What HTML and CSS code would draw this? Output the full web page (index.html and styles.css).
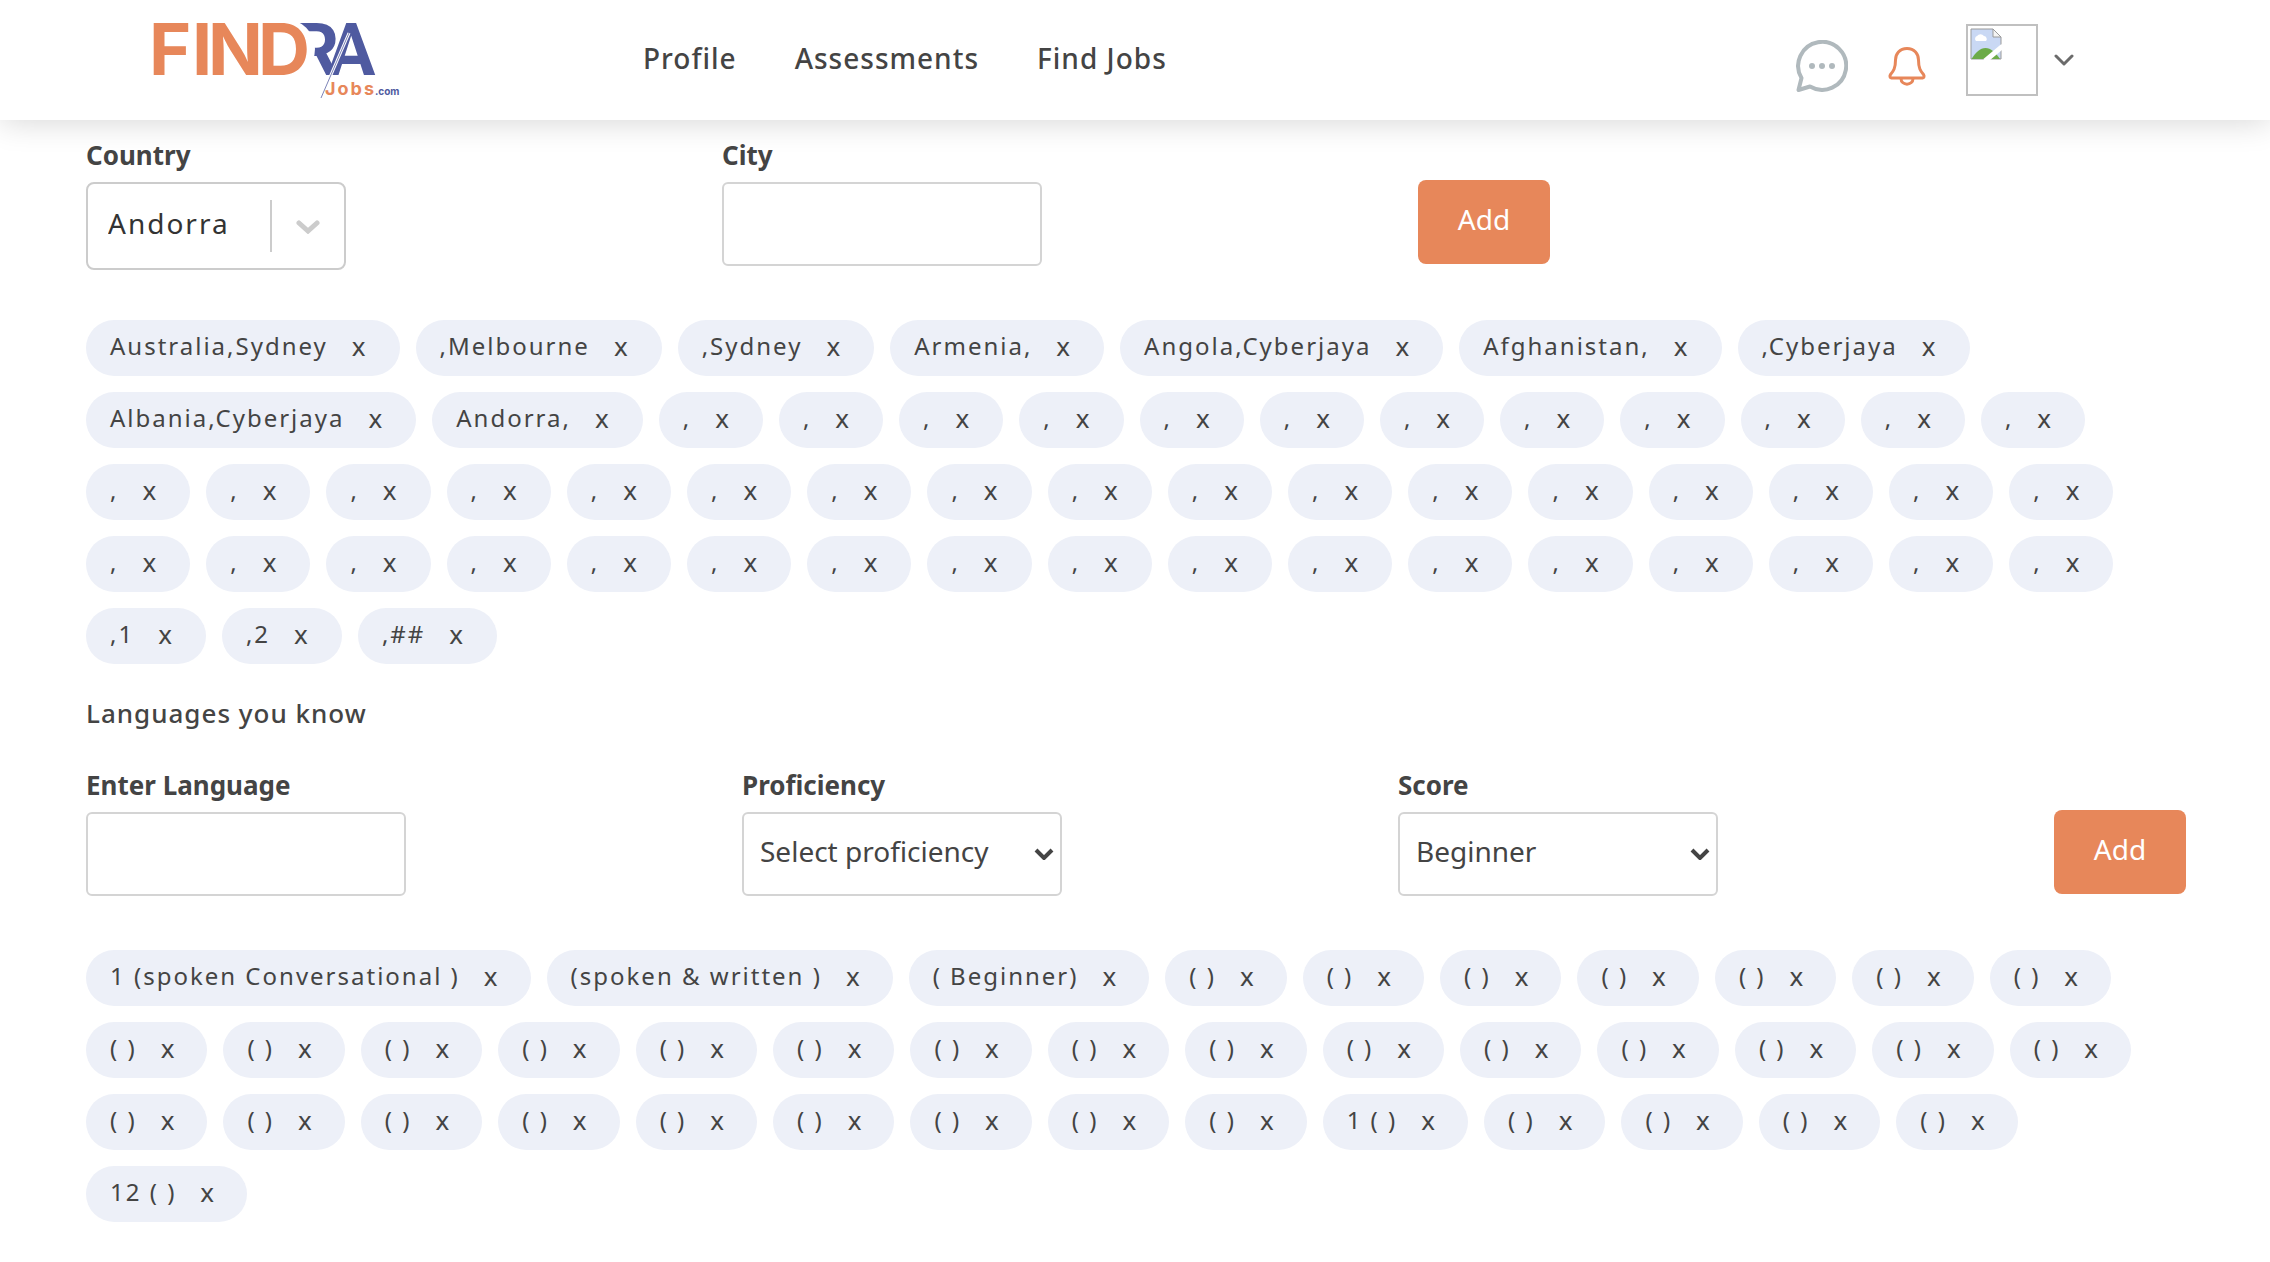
FILE: index.html
```html
<!DOCTYPE html>
<html lang="en">
<head>
  <meta charset="utf-8">
  <meta name="viewport" content="width=device-width, initial-scale=1">
  <title>Findra Jobs - Profile</title>
  <link rel="stylesheet" href="styles.css">
</head>
<body>
  <header class="header">
    <a class="logo" href="#" aria-label="Findra Jobs home">
      <svg class="logo-art" viewBox="0 0 250 80" role="img" aria-hidden="true">
        <text class="logo-blue" x="139" y="55">R</text>
        <text class="logo-blue" x="173" y="55">A</text>
        <circle cx="131" cy="29" r="30" fill="#fff"/>
        <path d="M138 20 160 36V46L168 57H138Z" fill="#fff"/>
        <text class="logo-orange" x="-5 38 54 104" y="55">FIND</text>
        <path d="M195 13 167 78" stroke="#fff" stroke-width="3"/>
        <text class="logo-jobs" x="171" y="75">Jobs</text>
        <text class="logo-com" x="221" y="75">.com</text>
        <path d="M195 13 167 78" stroke="#7d84b8" stroke-width="1"/>
      </svg>
    </a>
    <nav class="nav" aria-label="Main">
      <a href="#">Profile</a>
      <a href="#">Assessments</a>
      <a href="#">Find Jobs</a>
    </nav>
    <div class="tools">
      <button class="icon-button" type="button" aria-label="Messages">
        <svg width="52" height="52" viewBox="0 0 52 52" fill="none" stroke="#b0b9bd" stroke-width="4" stroke-linejoin="round">
          <path d="M5.500 38A24 24 0 1 1 14 46.500L2.500 50Z"/>
          <g fill="#b0b9bd" stroke="none"><circle cx="16" cy="26" r="3"/><circle cx="26" cy="26" r="3"/><circle cx="36" cy="26" r="3"/></g>
        </svg>
      </button>
      <button class="icon-button icon-button--bell" type="button" aria-label="Notifications">
        <svg width="38" height="40" viewBox="0 0 38 40" fill="none" stroke="#e7875a" stroke-width="3" stroke-linejoin="round">
          <path d="M19 2.500C11.500 2.500 7.500 8 7.500 14C7.500 22 5.500 25 2.500 28.500Q1 31.500 3.500 32H34.500Q37 31.500 35.500 28.500C32.500 25 30.500 22 30.500 14C30.500 8 26.500 2.500 19 2.500Z"/>
          <path d="M13 32.500C13 40 25 40 25 32.500"/>
        </svg>
      </button>
      <button class="account" type="button" aria-label="Account menu">
        <span class="avatar">
          <svg width="32" height="32" viewBox="0 0 32 32">
            <path d="M1 1H23L31 9V31H1Z" fill="#c9d8f4" stroke="#9a9a9a"/>
            <path d="M6 13A3 3 0 0 1 7 8A4.500 4.500 0 0 1 14 8A3 3 0 0 1 16 13Z" fill="#fff"/>
            <path d="M1.500 31C6 24 10 20 15.500 20S25 24 30 31Z" fill="#6cab48"/>
            <path d="M23 1V9H31Z" fill="#f4f4f4" stroke="#9a9a9a"/>
            <path d="M15 33 33 18" stroke="#fff" stroke-width="5"/>
          </svg>
        </span>
        <svg width="20" height="12" viewBox="0 0 20 12" fill="none" stroke="#6b6b6b" stroke-width="3" stroke-linecap="round" stroke-linejoin="round"><path d="M2 2 10 10 18 2"/></svg>
      </button>
    </div>
  </header>

  <main class="content">
    <form class="fields fields--location">
      <div class="field">
        <label for="country">Country</label>
        <div class="select select--country">
          <select id="country"><option>Andorra</option></select>
          <span class="select-divider"></span>
          <svg class="select-arrow" width="24" height="14" viewBox="0 0 24 14" fill="none" stroke="#ccc" stroke-width="5" stroke-linecap="round"><path d="M3 3 12 11 21 3"/></svg>
        </div>
      </div>
      <div class="field">
        <label for="city">City</label>
        <input id="city" type="text">
      </div>
      <button class="add" type="button">Add</button>
    </form>
    <ul class="chips" id="locations"></ul>

    <h2 class="heading">Languages you know</h2>
    <form class="fields">
      <div class="field">
        <label for="language">Enter Language</label>
        <input id="language" type="text">
      </div>
      <div class="field">
        <label for="proficiency">Proficiency</label>
        <div class="select">
          <select id="proficiency"><option>Select proficiency</option></select>
          <svg class="select-arrow" width="20" height="12" viewBox="0 0 20 12" fill="none" stroke="#444" stroke-width="4"><path d="M2 2 10 10 18 2"/></svg>
        </div>
      </div>
      <div class="field">
        <label for="score">Score</label>
        <div class="select">
          <select id="score"><option>Beginner</option></select>
          <svg class="select-arrow" width="20" height="12" viewBox="0 0 20 12" fill="none" stroke="#444" stroke-width="4"><path d="M2 2 10 10 18 2"/></svg>
        </div>
      </div>
      <button class="add" type="button">Add</button>
    </form>
    <ul class="chips chips--languages" id="languages"></ul>
  </main>
  <script src="app.js"></script>
</body>
</html>
```
FILE: styles.css
```css
* {
  box-sizing: border-box;
}

body {
  margin: 0;
  background: #fff;
  color: #444;
  font-family: "Noto Sans", "Open Sans", sans-serif;
}

button,
input,
select {
  font: inherit;
  color: inherit;
}

button {
  padding: 0;
  border: 0;
  background: none;
  cursor: pointer;
}

svg {
  display: block;
}

/* Header */
.header {
  display: flex;
  align-items: center;
  height: 120px;
  padding: 0 196px 0 154px;
  background: #fff;
  box-shadow: 0 2px 30px rgba(0, 0, 0, 0.16);
}

.logo-art {
  width: 250px;
  height: 80px;
  overflow: visible;
}

.logo-art text {
  font-family: Inter, sans-serif;
  font-weight: 700;
}

.logo-art .logo-orange {
  font-size: 72px;
}

.logo-art .logo-blue {
  font-family: Roboto, sans-serif;
  font-size: 72px;
}

.logo-orange,
.logo-jobs {
  fill: #e7875a;
}

.logo-blue,
.logo-com {
  fill: #4f5aa0;
}

.logo-art .logo-jobs {
  font-size: 18px;
  letter-spacing: 2px;
}

.logo-art .logo-com {
  font-size: 10px;
}

.nav {
  display: flex;
  gap: 58px;
  margin-left: 239px;
  padding-bottom: 4px;
}

.nav a {
  color: inherit;
  font-size: 28px;
  font-weight: 500;
  line-height: 40px;
  letter-spacing: 1px;
  text-decoration: none;
}

.tools {
  display: flex;
  align-items: center;
  margin-left: auto;
}

.icon-button {
  margin-top: 12px;
}

.icon-button--bell {
  margin-right: 40px;
  margin-left: 40px;
}

.account {
  display: flex;
  align-items: center;
  gap: 16px;
}

.avatar {
  width: 72px;
  height: 72px;
  padding: 2px;
  border: 2px solid #c0c0c0;
}

/* Forms */
.content {
  padding: 17px 84px 40px 86px;
}

.fields {
  display: flex;
  justify-content: space-between;
  align-items: flex-start;
}

.fields--location {
  max-width: 1464px;
}

.field {
  display: flex;
  flex-direction: column;
  gap: 9px;
}

.field label {
  font-size: 26px;
  font-weight: 700;
  line-height: 36px;
}

.field input,
.select select {
  width: 320px;
  height: 84px;
  padding: 0 40px 6px 16px;
  border: 2px solid #d4d4d4;
  border-radius: 6px;
  background: #fff;
  font-size: 28px;
  appearance: none;
}

.select {
  position: relative;
}

.select-arrow {
  position: absolute;
  top: 36px;
  right: 8px;
  pointer-events: none;
}

.select--country select {
  width: 260px;
  height: 88px;
  padding-left: 20px;
  border-color: #ccc;
  border-radius: 8px;
  color: #333;
  letter-spacing: 2px;
}

.select--country .select-arrow {
  top: 38px;
  right: 26px;
}

.select-divider {
  position: absolute;
  top: 18px;
  right: 74px;
  width: 2px;
  height: 52px;
  background: #ccc;
}

.add {
  width: 132px;
  height: 84px;
  margin-top: 43px;
  padding-bottom: 6px;
  border-radius: 8px;
  background: #e7875a;
  color: #fff;
  font-size: 28px;
}

.heading {
  margin: 31px 0 36px;
  font-size: 26px;
  font-weight: 500;
  line-height: 36px;
  letter-spacing: 1px;
}

/* Chips */
.chips {
  display: flex;
  flex-wrap: wrap;
  gap: 16px;
  margin: 50px 0 0;
  padding: 0;
  list-style: none;
}

.chips--languages {
  margin-top: 54px;
}

.chip {
  display: flex;
  gap: 24px;
  height: 56px;
  padding: 10px 34px 14px 24px;
  border-radius: 28px;
  background: #edf0f8;
  font-size: 24px;
  line-height: 32px;
  letter-spacing: 2px;
  white-space: nowrap;
}

.chips--languages .chip {
  padding-right: 33px;
}

.chip button {
  font-size: 26px;
  line-height: 32px;
  letter-spacing: 0;
}
```
FILE: app.js
```js
const locations = [
  "Australia,Sydney", ",Melbourne", ",Sydney", "Armenia,", "Angola,Cyberjaya",
  "Afghanistan,", ",Cyberjaya", "Albania,Cyberjaya", "Andorra,",
  ...Array(46).fill(","),
  ",1", ",2", ",##",
];

const languages = [
  "1 (spoken Conversational )", "(spoken & written )", "( Beginner)",
  ...Array(31).fill("( )"),
  "1 ( )",
  ...Array(4).fill("( )"),
  "12 ( )",
];

function renderChips(listId, values) {
  const list = document.getElementById(listId);
  for (const value of values) {
    const chip = document.createElement("li");
    chip.className = "chip";
    const text = document.createElement("span");
    text.textContent = value;
    const remove = document.createElement("button");
    remove.type = "button";
    remove.textContent = "x";
    remove.setAttribute("aria-label", "x, remove " + value);
    chip.append(text, remove);
    list.append(chip);
  }
}

renderChips("locations", locations);
renderChips("languages", languages);
```
